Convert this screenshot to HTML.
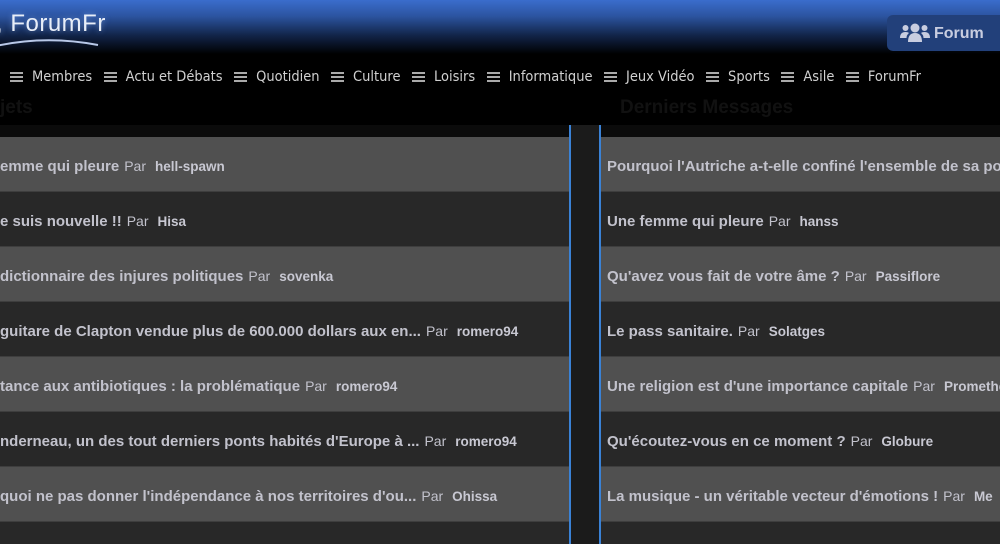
<!DOCTYPE html>
<html><head><meta charset="utf-8"><style>
*{margin:0;padding:0;box-sizing:border-box}
html,body{width:1000px;height:544px;overflow:hidden}
body{background:#000;font-family:"Liberation Sans",sans-serif;position:relative}
.hdr{position:absolute;left:0;top:0;width:1000px;height:54px;background:linear-gradient(#3a6dcc 0%,#2c54a0 30%,#12254a 65%,#000 100%)}
.logo{position:absolute;left:-4px;top:10px;font-size:24px;color:#e8eef8;letter-spacing:0.5px;text-shadow:0 0 6px rgba(150,190,255,.5)}
.btn{position:absolute;left:887px;top:15px;width:120px;height:36px;background:#22407a;border-radius:6px 0 0 6px;color:#c8cde0;font-weight:bold;font-size:16px;padding:10px 0 0 47px}
.nav{position:absolute;top:69px;left:10px;white-space:nowrap;font-family:"DejaVu Sans Condensed","Liberation Sans",sans-serif;font-size:14.5px;color:#d0d0d0}
.nav span{margin-right:11.5px}
.nav b{display:inline-block;width:13px;height:10px;border-top:2px solid #aaa;border-bottom:2px solid #aaa;position:relative;margin-right:9px;vertical-align:-1px}
.nav b:after{content:"";position:absolute;left:0;right:0;top:2px;border-top:2px solid #aaa}
.ttl{position:absolute;top:97px;font-size:19px;font-weight:bold;color:#111}
.strip{position:absolute;left:0;top:125px;width:1000px;height:12px;background:#0b0b0b}
.col{position:absolute;top:137px;height:407px;overflow:hidden}
.row{height:55px;border-bottom:1px solid #3e3e3e;color:#c2c2cc;font-size:15px;font-weight:bold;padding-top:21px;white-space:nowrap;overflow:hidden}
.row:nth-child(odd){background:#505050}
.row:nth-child(even){background:#282828}
.row i{font-style:normal;font-weight:normal;font-size:14px;margin:0 9px 0 5px}
.row u{text-decoration:none;font-size:13.5px;color:#c8c8d2}
.mid{position:absolute;left:569px;top:125px;width:32px;height:419px;background:#1b1b1b;border-left:2px solid #3a82d6;border-right:2px solid #3a82d6}
</style></head><body>
<div class="hdr"></div>
<div class="logo">, ForumFr
<svg style="position:absolute;left:0;top:27px" width="104" height="12"><path d="M0 9 Q50 -2 102 8" stroke="#b8c8e8" stroke-width="2" fill="none"/></svg></div>
<div class="btn"><svg style="position:absolute;left:13px;top:8px" width="30" height="20" viewBox="0 0 30 20" fill="#c8cde0"><circle cx="15" cy="5" r="4.5"/><circle cx="5.5" cy="5" r="3"/><circle cx="24.5" cy="5" r="3"/><path d="M8 19 Q8 10 15 10 Q22 10 22 19Z"/><path d="M0 15 Q0 9 5.5 9 Q8 9 9 10 Q6.5 12 6.5 15Z"/><path d="M30 15 Q30 9 24.5 9 Q22 9 21 10 Q23.5 12 23.5 15Z"/></svg>Forum</div>
<div class="nav"><span><b></b>Membres</span><span><b></b>Actu et Débats</span><span><b></b>Quotidien</span><span><b></b>Culture</span><span><b></b>Loisirs</span><span><b></b>Informatique</span><span><b></b>Jeux Vidéo</span><span><b></b>Sports</span><span><b></b>Asile</span><span><b></b>ForumFr</span></div>
<div class="ttl" style="left:0">jets</div>
<div class="ttl" style="left:620px">Derniers Messages</div>
<div class="strip"></div>
<div class="col" style="left:0;width:570px">
<div class="row">emme qui pleure<i>Par</i><u>hell-spawn</u></div>
<div class="row">e suis nouvelle !!<i>Par</i><u>Hisa</u></div>
<div class="row">dictionnaire des injures politiques<i>Par</i><u>sovenka</u></div>
<div class="row">guitare de Clapton vendue plus de 600.000 dollars aux en...<i>Par</i><u>romero94</u></div>
<div class="row">tance aux antibiotiques : la problématique<i>Par</i><u>romero94</u></div>
<div class="row">nderneau, un des tout derniers ponts habités d'Europe à ...<i>Par</i><u>romero94</u></div>
<div class="row">quoi ne pas donner l'indépendance à nos territoires d'ou...<i>Par</i><u>Ohissa</u></div>
<div class="row"></div>
</div>
<div class="mid"></div>
<div class="col" style="left:601px;width:399px">
<div class="row" style="padding-left:6px">Pourquoi l'Autriche a-t-elle confiné l'ensemble de sa population</div>
<div class="row" style="padding-left:6px">Une femme qui pleure<i>Par</i><u>hanss</u></div>
<div class="row" style="padding-left:6px">Qu'avez vous fait de votre âme ?<i>Par</i><u>Passiflore</u></div>
<div class="row" style="padding-left:6px">Le pass sanitaire.<i>Par</i><u>Solatges</u></div>
<div class="row" style="padding-left:6px">Une religion est d'une importance capitale<i>Par</i><u>Prometheus</u></div>
<div class="row" style="padding-left:6px">Qu'écoutez-vous en ce moment ?<i>Par</i><u>Globure</u></div>
<div class="row" style="padding-left:6px">La musique - un véritable vecteur d'émotions !<i>Par</i><u>Me</u></div>
<div class="row"></div>
</div>
</body></html>
